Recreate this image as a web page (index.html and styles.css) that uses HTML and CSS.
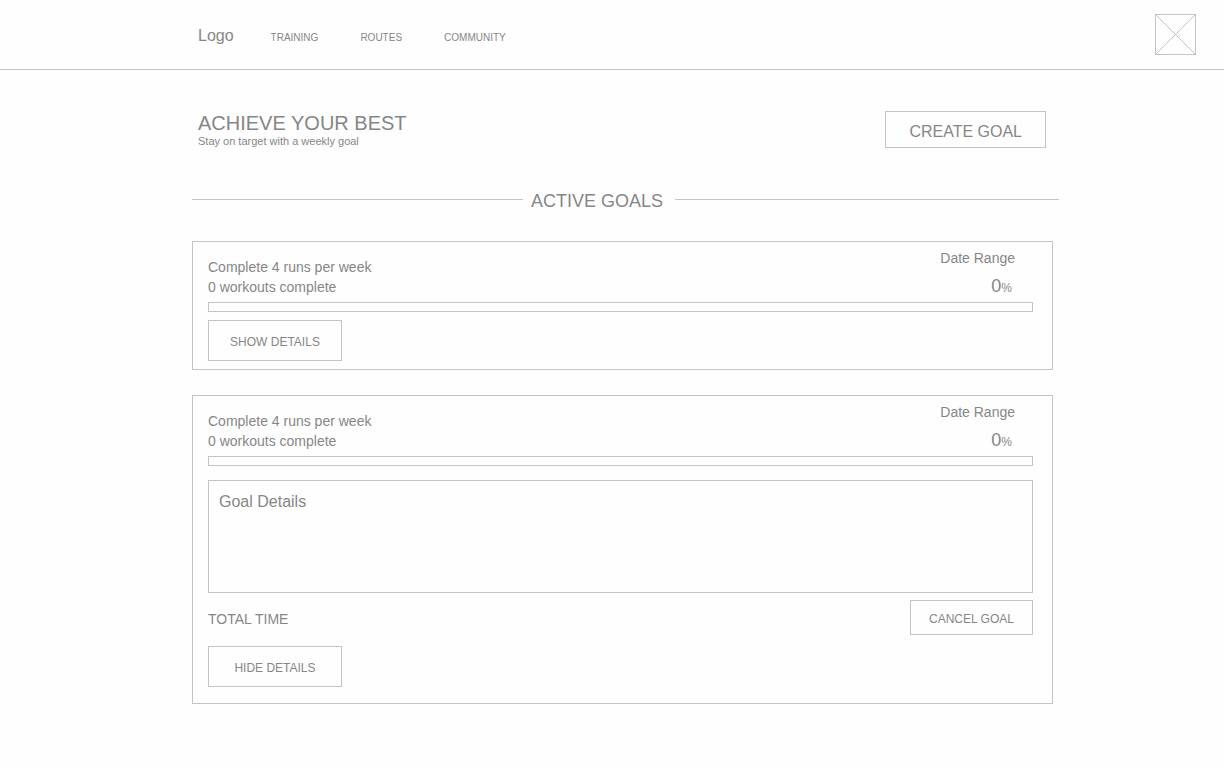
FILE: index.html
```html
<!DOCTYPE html>
<html lang="en">
<head>
  <meta charset="utf-8">
  <meta name="viewport" content="width=device-width, initial-scale=1">
  <title>Active Goals</title>
  <link rel="stylesheet" href="styles.css">
</head>
<body>
  <header class="topbar">
    <div class="brand">
      <a class="logo" href="#">Logo</a>
      <nav class="nav">
        <a href="#">TRAINING</a>
        <a href="#">ROUTES</a>
        <a href="#">COMMUNITY</a>
      </nav>
    </div>
    <a class="avatar" href="#" aria-label="Profile">
      <svg viewBox="0 0 41 41" fill="none" stroke="currentColor" aria-hidden="true">
        <rect x="0.5" y="0.5" width="40" height="40"/>
        <path d="M0.5 0.5L40.5 40.5M40.5 0.5L0.5 40.5"/>
      </svg>
    </a>
  </header>

  <main class="page">
    <section class="intro">
      <div>
        <h1 class="intro-title">ACHIEVE YOUR BEST</h1>
        <p class="intro-text">Stay on target with a weekly goal</p>
      </div>
      <button class="button button-create" type="button">CREATE GOAL</button>
    </section>

    <div class="divider">
      <h2 class="divider-title">ACTIVE GOALS</h2>
    </div>

    <div class="goals">
      <article class="goal">
        <div class="goal-head">
          <div class="goal-summary">
            <p>Complete 4 runs per week</p>
            <p>0 workouts complete</p>
          </div>
          <div class="goal-status">
            <p>Date Range</p>
            <p class="percent">0<span class="percent-sign">%</span></p>
          </div>
        </div>
        <progress class="bar" value="0" max="100" aria-label="Goal progress"></progress>
        <button class="button button-toggle" type="button" aria-expanded="false">SHOW DETAILS</button>
      </article>

      <article class="goal goal-open">
        <div class="goal-head">
          <div class="goal-summary">
            <p>Complete 4 runs per week</p>
            <p>0 workouts complete</p>
          </div>
          <div class="goal-status">
            <p>Date Range</p>
            <p class="percent">0<span class="percent-sign">%</span></p>
          </div>
        </div>
        <progress class="bar" value="0" max="100" aria-label="Goal progress"></progress>
        <section class="details">
          <h3 class="details-title">Goal Details</h3>
        </section>
        <div class="goal-foot">
          <p class="total">TOTAL TIME</p>
          <button class="button button-cancel" type="button">CANCEL GOAL</button>
        </div>
        <button class="button button-toggle" type="button" aria-expanded="true">HIDE DETAILS</button>
      </article>
    </div>
  </main>
</body>
</html>
```

FILE: styles.css
```css
:root {
  --line: #c4c4c4;
  --text: #868686;
  --surface: #fefefe;
}

* {
  box-sizing: border-box;
}

body {
  margin: 0;
  background: var(--surface);
  color: var(--text);
  font: 14px/20px "Liberation Sans", Arial, sans-serif;
}

h1,
h2,
h3,
p {
  margin: 0;
  font-weight: 400;
}

a {
  color: inherit;
  text-decoration: none;
}

.topbar {
  display: flex;
  align-items: center;
  justify-content: space-between;
  padding: 14px 28px 14px 198px;
  border-bottom: 1px solid var(--line);
}

.brand {
  display: flex;
  align-items: baseline;
  gap: 37px;
  padding-top: 4px;
}

.logo {
  font-size: 16px;
}

.nav {
  display: flex;
  gap: 42px;
  font-size: 10px;
}

.avatar {
  color: var(--line);
}

.avatar svg {
  display: block;
  width: 41px;
  height: 41px;
}

.page {
  padding: 41px 165px 64px 192px;
}

.intro {
  display: flex;
  justify-content: space-between;
  padding: 0 13px 0 6px;
}

.intro-title {
  font-size: 20px;
  line-height: 24px;
}

.intro-text {
  font-size: 11px;
  line-height: 12px;
}

.button {
  background: none;
  border: 1px solid var(--line);
  color: inherit;
  font: inherit;
  font-size: 12px;
  line-height: 16px;
  text-align: center;
  cursor: pointer;
}

.button-create {
  padding: 11px 23px 6px;
  font-size: 16px;
  line-height: 18px;
}

.button-toggle {
  width: 134px;
  padding: 13px 8px 10px;
}

.button-cancel {
  width: 123px;
  padding: 10px 8px 7px;
}

.divider {
  display: flex;
  align-items: center;
  margin-top: 40px;
}

.divider::before,
.divider::after {
  content: "";
  flex: 331;
  height: 1px;
  background: var(--line);
}

.divider::after {
  flex: 384;
}

.divider-title {
  padding: 3px 12px 0 8px;
  font-size: 18px;
}

.goals {
  display: grid;
  gap: 25px;
  margin: 30px 6px 0 0;
}

.goal {
  padding: 6px 19px 8px 15px;
  border: 1px solid var(--line);
}

.goal-open {
  padding-bottom: 16px;
}

.goal-head {
  display: flex;
  align-items: flex-end;
  justify-content: space-between;
}

.goal-status {
  padding-right: 18px;
  text-align: right;
}

.percent {
  margin-top: 7px;
  padding-right: 3px;
  font-size: 18px;
  line-height: 22px;
}

.percent-sign {
  font-size: 12px;
  line-height: 12px;
}

.bar {
  appearance: none;
  display: block;
  width: 100%;
  height: 10px;
  margin: 5px 0 8px;
  border: 1px solid var(--line);
  background: none;
}

.bar::-webkit-progress-bar {
  background: none;
}

.bar::-webkit-progress-value {
  background: var(--line);
}

.details {
  min-height: 113px;
  margin-top: 14px;
  padding: 11px 10px;
  border: 1px solid var(--line);
}

.details-title {
  font-size: 16px;
}

.goal-foot {
  display: flex;
  align-items: center;
  justify-content: space-between;
  margin: 7px 0 11px;
}

.total {
  padding-top: 2px;
}

@media (max-width: 900px) {
  .topbar {
    padding-left: 28px;
  }

  .page {
    padding-left: 22px;
    padding-right: 22px;
  }
}
```
